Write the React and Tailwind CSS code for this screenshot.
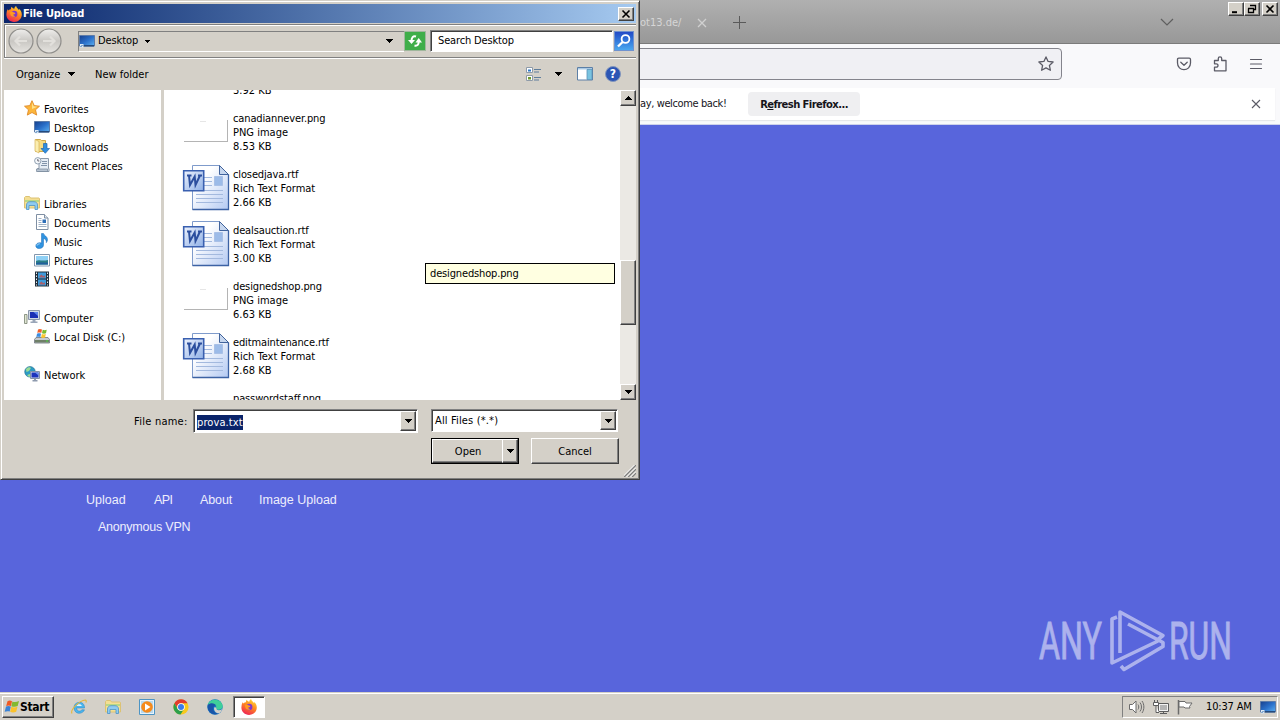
import React from 'react';
import { clsx } from 'clsx';

const raised = 'border border-t-white border-l-white border-r-[#404040] border-b-[#404040] shadow-[inset_-1px_-1px_0_#808080] bg-[#d4d0c8]';
const sunken = 'border border-t-[#808080] border-l-[#808080] border-r-white border-b-white shadow-[inset_1px_1px_0_#404040] bg-white';

/* ---------- icons ---------- */

function Arrow({ className }) {
  return (
    <svg viewBox="0 0 7 4" className={clsx('w-[7px] h-1 shrink-0', className)} shapeRendering="crispEdges">
      <path d="M0 0h7L3.5 4z" fill="#000" />
    </svg>
  );
}

function FirefoxIcon({ className }) {
  return (
    <svg viewBox="0 0 16 16" className={className}>
      <defs>
        <linearGradient id="fx" x1="0.8" y1="0" x2="0.3" y2="1">
          <stop offset="0" stopColor="#ffe03a" />
          <stop offset="0.45" stopColor="#ff8a1f" />
          <stop offset="1" stopColor="#ee2257" />
        </linearGradient>
      </defs>
      <path d="M1.6 3.2l1 1.2C3.2 3.6 4 3.2 5 3.3c-.2-1 .1-2 .8-2.6.4 1.200 1.300 1.600 2.500 2C8.500 1.500 9.200.6 10.100 0c.3 1.800 1.700 2.500 2.900 4 .3-.5.3-.9.2-1.300 1.500 1.500 2.600 3.500 2.600 5.700 0 4.200-3.400 7.500-7.700 7.500S.4 12.700.4 8.500c0-2 .4-3.700 1.200-5.300z" fill="url(#fx)" />
      <circle cx="8.200" cy="8" r="3.200" fill="#8038cc" />
      <path d="M4.300 5.800c1.200-.8 2.600-.2 3.500.7 1 .2 1.500.5 1.500.9-.4.700-1.500.6-1.900 1.200-.2 1 .8 1.700 2 1.400-1.200 1.400-3.800 1-4.700-.8-.6-1.100-.8-2.300-.4-3.400z" fill="#ff9a20" />
    </svg>
  );
}

function MonitorIcon({ className }) {
  return (
    <svg viewBox="0 0 16 16" className={className}>
      <defs>
        <linearGradient id="mon" x1="0" y1="0" x2="1" y2="1">
          <stop offset="0" stopColor="#173f8c" />
          <stop offset="0.5" stopColor="#2a6fc9" />
          <stop offset="1" stopColor="#5cb0f0" />
        </linearGradient>
      </defs>
      <path d="M.5 2.500h15v10.500h-15z" fill="url(#mon)" stroke="#5d7ba8" />
      <path d="M1 12h14v1.500H1z" fill="#244a7c" />
      <path d="M1 11h3.500v3.500H1z" fill="#dce9f5" />
      <path d="M1.500 14l2-2" stroke="#2c6aae" fill="none" />
    </svg>
  );
}

function StarIcon({ className }) {
  return (
    <svg viewBox="0 0 16 16" className={className}>
      <path d="M8 .7l2.200 4.900 5.300.6-4 3.600 1.200 5.300L8 12.500l-4.700 2.600 1.200-5.300-4-3.600 5.300-.6z" fill="#fcb63a" stroke="#e08a28" strokeWidth=".9" />
      <path d="M8 2.500l1.600 3.800 3.800.5L8 9z" fill="#ffe08a" />
    </svg>
  );
}

function DownloadsIcon({ className }) {
  return (
    <svg viewBox="0 0 16 16" className={className}>
      <path d="M1.500 1.500h5l1 1h4v11h-10z" fill="#f5dc84" stroke="#cfa94a" />
      <path d="M1 1.500l4 2V15l-4-2z" fill="#fbeeb0" stroke="#d6b35a" strokeWidth=".7" />
      <path d="M9.500 5.500h3.500v5h2.500l-4.200 4.800L7 10.500h2.500z" fill="#2f8ee0" stroke="#1c66b0" strokeWidth=".7" />
    </svg>
  );
}

function RecentIcon({ className }) {
  return (
    <svg viewBox="0 0 16 16" className={className}>
      <path d="M5 1.500h9.500v10H15v3H3.500v-3H5z" fill="#e6edf5" stroke="#8b99aa" />
      <path d="M2.500 12h11v2.500h-11z" fill="#b8c4d2" stroke="#76879a" strokeWidth=".7" />
      <path d="M8 4.500h5M8 6.500h5M7 8.500h6" stroke="#8294aa" />
      <circle cx="3.800" cy="3.800" r="3.200" fill="#f5f8fb" stroke="#8797aa" strokeWidth=".9" />
      <path d="M3.800 2v2h1.500" stroke="#445" strokeWidth=".8" fill="none" />
    </svg>
  );
}

function LibrariesIcon({ className }) {
  return (
    <svg viewBox="0 0 16 16" className={className}>
      <path d="M.5 13V2.500l1-1h4l1 1.500h8.500l.5.5V13z" fill="#f4df93" stroke="#dcc274" />
      <path d="M1 5h14v2H1z" fill="#b9d886" />
      <path d="M2.500 14.500V10c0-2 1.500-3.300 3.500-3.300h4c2 0 3.500 1.300 3.500 3.300v4.500H11v-4H5v4z" fill="#8fcbf0" stroke="#4d94c8" strokeWidth=".8" />
    </svg>
  );
}

function DocumentIcon({ className }) {
  return (
    <svg viewBox="0 0 16 16" className={className}>
      <path d="M2.500.5h8l3.500 3.500v11.500H2.500z" fill="#fff" stroke="#7f8fa3" />
      <path d="M10.500.5V4H14" fill="#dfe7ef" stroke="#7f8fa3" />
      <path d="M4.500 4.500h3M4.500 6.500h3M4.500 8.500h3M4.500 10.500h8M4.500 12.500h8" stroke="#9fb1c6" />
      <path d="M8.500 5.500h3.500v3.500H8.500z" fill="#2e6fb8" />
    </svg>
  );
}

function MusicIcon({ className }) {
  return (
    <svg viewBox="0 0 16 16" className={className}>
      <path d="M7.500.5h2c.3 2 4 2.800 4 6 0 1.400-.6 2.500-1.200 3.200.4-2.300-.8-3.700-2.800-4.200V12c0 2-1.800 3.500-4.200 3.500-2 0-3.500-1-3.500-2.600C1.800 11 3.700 9.700 5.700 9.700c.7 0 1.300.1 1.800.4z" fill="#2f93e0" stroke="#1a68b4" strokeWidth=".5" />
      <path d="M3 12.500c.3-1 1.500-1.700 2.700-1.700" stroke="#b5e0fb" fill="none" />
    </svg>
  );
}

function PicturesIcon({ className }) {
  return (
    <svg viewBox="0 0 16 16" className={className}>
      <path d="M.5 2.500h15v11.500H.5z" fill="#fff" stroke="#8397ad" />
      <path d="M2 4h12v8.500H2z" fill="#8ed0f5" />
      <path d="M2 9c3-2 5 .5 12-1v4.500H2z" fill="#2c7f86" />
      <path d="M2 11c4-1 8 0 12-.5v2H2z" fill="#225f9c" />
    </svg>
  );
}

function VideosIcon({ className }) {
  return (
    <svg viewBox="0 0 16 16" className={className}>
      <path d="M1 .5h14v15H1z" fill="#23303c" />
      <path d="M4 1.500h8v6H4zM4 8.500h8v6H4z" fill="#3f9bdb" />
      <path d="M5.500 5l2-1.500 1.500 1.500 2-.5v2h-5.500zM5.500 12l2-1.500 1.500 1.500 2-.5v2h-5.500z" fill="#a85f6a" />
      <path d="M2.500 1.500v13M13.500 1.500v13" stroke="#e8eef3" strokeDasharray="1.5 1.5" />
    </svg>
  );
}

function ComputerIcon({ className }) {
  return (
    <svg viewBox="0 0 16 16" className={className}>
      <path d="M.5 5.500h2.500v9H.5z" fill="#dfe5d2" stroke="#76806e" strokeWidth=".8" />
      <path d="M4.500 1.500h11v9h-11z" fill="#cfd8e6" stroke="#8a97ab" />
      <path d="M6 3h8v6H6z" fill="#1b2fb4" />
      <path d="M9.500 3H14v4z" fill="#5b83ec" />
      <path d="M8.500 11h3v1.500h2v1.500H6.500v-1.500h2z" fill="#9aa6b8" />
    </svg>
  );
}

function DiskIcon({ className }) {
  return (
    <svg viewBox="0 0 16 16" className={className}>
      <path d="M2 9.500h12l1.500 2v3.500H.5v-3.500z" fill="#c6cbd0" stroke="#6d757d" strokeWidth=".8" />
      <path d="M1 12h14v2.500H1z" fill="#6f8068" />
      <path d="M12 12.500h2v1h-2z" fill="#4bdb3c" />
      <path d="M4 1.500c1.500-.8 2.600-.6 4 0L7.300 5c-1.400-.6-2.500-.6-4 0z" fill="#f0602a" />
      <path d="M8.700 1.700c1.400.6 2.600.6 4 0L12 5.200c-1.400.6-2.600.6-4 0z" fill="#7dbb2c" />
      <path d="M3 5.800c1.500-.6 2.600-.6 4 0l-.7 3.500c-1.400-.6-2.500-.6-4 0z" fill="#3b8ce0" />
      <path d="M7.800 6c1.400.6 2.600.6 4 0l-.7 3.500c-1.400.6-2.600.6-4 0z" fill="#fcc52e" />
    </svg>
  );
}

function NetworkIcon({ className }) {
  return (
    <svg viewBox="0 0 16 16" className={className}>
      <circle cx="6" cy="5.800" r="5.300" fill="#2c9bc4" stroke="#26708e" strokeWidth=".6" />
      <path d="M2 3c2-2 4-2 5-1L5 5 2.500 6zM3 9l3-1 1 2-2 1z" fill="#9bdc94" />
      <path d="M6.500 5.500h9v7h-9z" fill="#d4dcea" stroke="#8492a8" />
      <path d="M7.500 6.500h7v5h-7z" fill="#1c33bc" />
      <path d="M11 6.500h3.500v3z" fill="#6a90f0" />
      <path d="M10 13h2v1h1.500v1.500h-5V14H10z" fill="#8e9aae" />
    </svg>
  );
}

function WordFileIcon() {
  return (
    <svg viewBox="0 0 48 48" className="w-12 h-12">
      <defs>
        <linearGradient id="wpage" x1="0" y1="0" x2="1" y2="1">
          <stop offset="0.3" stopColor="#fff" />
          <stop offset="1" stopColor="#b3c9f2" />
        </linearGradient>
        <linearGradient id="wbox" x1="0" y1="0" x2="1" y2="1">
          <stop offset="0" stopColor="#eef3fd" />
          <stop offset="1" stopColor="#8fb0e6" />
        </linearGradient>
      </defs>
      <path d="M10.500 1.500h27l9 9v35h-36z" fill="url(#wpage)" stroke="#7f9bcb" />
      <path d="M46.500 10.500v35h-36" fill="none" stroke="#3c62a4" strokeWidth="1.300" />
      <path d="M37.500 1.500v9h9z" fill="#c6d6ee" stroke="#41639c" />
      <path d="M22 13.500h8M22 17.500h8M22 21.500h8M14 26.500h27M14 30.500h27M14 34.500h27M14 38.500h27" stroke="#a3b9de" />
      <path d="M32.500 12.500h8v9h-8z" fill="#9cbbe8" stroke="#a9c0e6" />
      <path d="M1.700 6.700h20v20h-20z" fill="url(#wbox)" stroke="#3a60b0" strokeWidth="1.600" />
      <path d="M5 11.500h4.500M7 11.500l1 9.500 4.700-8.500.8 8.500 4.500-9.500M16 11.500h4" fill="none" stroke="#2c4f9e" strokeWidth="2" />
    </svg>
  );
}

function WindowsLogo({ className }) {
  return (
    <svg viewBox="0 0 16 16" className={className}>
      <path d="M3.500 2.300C5 1.200 6.500 1.300 8 2.200L7 7C5.500 6.200 4 6.200 2.200 7z" fill="#ee5a24" />
      <path d="M8.400 2.500c1.700.9 4.200.8 6.600-.5l-1.300 5c-2 1-4.400 1-6.300.2z" fill="#83b92f" />
      <path d="M2 7.500c1.700-.8 3.200-.8 4.800 0l-1.100 5.100C4 12 2.500 12 .7 12.800z" fill="#3a83d6" />
      <path d="M7.300 7.800c1.800.9 4.200.8 6.200-.1l-1.300 5c-2 1-4.200 1-6 .1z" fill="#fbc22b" />
    </svg>
  );
}

/* ---------- firefox window behind the dialog ---------- */

function CaptionButton({ children, className }) {
  return (
    <div className={clsx(raised, 'w-4 h-3.5 flex items-center justify-center', className)}>
      <svg viewBox="0 0 10 10" className="w-2.5 h-2.5 shrink-0" fill="none" stroke="#000" strokeWidth="1.6">
        {children}
      </svg>
    </div>
  );
}

function BrowserWindow() {
  return (
    <div className="flex flex-col h-[692px]">
      <div className="h-11 shrink-0 flex pl-[640px] bg-gradient-to-b from-[#b0b0b0] to-[#989898] border-b border-[#7b7b7b]">
        <div className="flex items-center w-[53px] pt-1 text-[11px] text-[#d6d6d6]">ot13.de/</div>
        <div className="flex items-center gap-[22px] pt-0.5 text-[#d0d0d0]">
          <svg viewBox="0 0 18 18" className="w-[18px] h-[18px]" fill="none" stroke="currentColor" strokeWidth="1.300">
            <path d="M5 5l8 8M13 5l-8 8" />
          </svg>
          <svg viewBox="0 0 13 13" className="w-[13px] h-[13px]" fill="none" stroke="#5a5a5a" strokeWidth="1">
            <path d="M6.500 0v13M0 6.500h13" />
          </svg>
        </div>
        <div className="flex-1" />
        <svg viewBox="0 0 14 8" className="w-3.5 h-2 mt-[18px] mr-[54px]" fill="none" stroke="#5f5f5f" strokeWidth="1.200">
          <path d="M1 1l6 6 6-6" />
        </svg>
        <div className="flex pt-0.5 pr-0.5">
          <CaptionButton><path d="M1 8.200h5" strokeWidth="2" /></CaptionButton>
          <CaptionButton>
            <path d="M3.500 1.500h5v4h-2M3 1.500h6M1 4.500h5.500v4H1.500v-4" strokeWidth="1.300" />
          </CaptionButton>
          <CaptionButton className="ml-0.5"><path d="M1.500 1.500l7 7M8.500 1.500l-7 7" /></CaptionButton>
        </div>
      </div>

      <div className="h-11 shrink-0 flex items-start pt-1 bg-[#f9f9fb] text-[#5b5b66]">
        <div className="w-[1062px] h-8 flex items-center justify-end pr-[7px] rounded-r bg-[#f0f0f4] border border-[#84848c]">
          <svg viewBox="0 0 16 16" className="w-4 h-4" fill="none" stroke="currentColor" strokeWidth="1.300" strokeLinejoin="round">
            <path d="M8 .9l2.100 4.500 5 .6-3.700 3.400 1 4.900L8 11.900l-4.400 2.400 1-4.900L.9 6l5-.6z" />
          </svg>
        </div>
        <div className="flex-1 h-8 flex items-center justify-end gap-5 pr-4">
          <svg viewBox="0 0 16 16" className="w-4 h-4" fill="none" stroke="currentColor" strokeWidth="1.300" strokeLinecap="round" strokeLinejoin="round">
            <path d="M2.800 2.200h10.400c.8 0 1.300.5 1.300 1.300V7c0 4-3 6.700-6.500 6.700S1.500 11 1.500 7V3.500c0-.8.5-1.300 1.300-1.300z" />
            <path d="M4.800 6.200L8 9.200l3.200-3" />
          </svg>
          <svg viewBox="0 0 16 16" className="w-4 h-4" fill="none" stroke="currentColor" strokeWidth="1.300" strokeLinejoin="round">
            <path d="M2.500 4.500h3.800V2.600a1.700 1.700 0 0 1 3.400 0v1.900H14v10.300H2.500v-3.600h1.800a1.700 1.700 0 0 0 0-3.400H2.500z" />
          </svg>
          <svg viewBox="0 0 16 16" className="w-4 h-4" stroke="currentColor" strokeWidth="1.200" strokeLinecap="round">
            <path d="M2.500 3.500h11M2.500 8h11M2.500 12.500h11" />
          </svg>
        </div>
      </div>

      <div className="h-[37px] shrink-0 pr-[5px] bg-[#f9f9fb] border-b border-[#cfd2ea]">
        <div className="h-8 flex items-center pl-[640px] bg-white shadow-[0_1px_1px_#e6e6ea]">
          <span className="w-[108px] text-[11px] text-[#15141a] tracking-[-0.38px]">ay, welcome back!</span>
          <button className="w-28 h-6 rounded bg-[#efeff1] text-[10px] font-bold text-[#15141a] font-['DejaVu_Sans'] tracking-[-0.58px]">
            R<span className="underline">e</span>fresh Firefox...
          </button>
          <div className="flex-1" />
          <svg viewBox="0 0 10 10" className="w-2.5 h-2.5 mr-3.5" stroke="#5b5b66" strokeWidth="1.100">
            <path d="M1 1l8 8M9 1l-8 8" />
          </svg>
        </div>
      </div>

      <div className="flex-1 bg-[#5865dc] pt-[365px] pl-[86px] text-[12.5px] text-[#eeeefc] font-['Liberation_Sans',sans-serif]">
        <div className="flex leading-[20px]">
          <span className="w-[68px]">Upload</span>
          <span className="w-[46px] tracking-[-0.6px]">API</span>
          <span className="w-[59px] tracking-[-0.1px]">About</span>
          <span>Image Upload</span>
        </div>
        <div className="pl-3 mt-[7px] leading-[20px] tracking-[-0.22px]">Anonymous VPN</div>
      </div>
    </div>
  );
}

/* ---------- file dialog ---------- */

const places = [
  { label: 'Favorites', icon: StarIcon, root: true },
  { label: 'Desktop', icon: MonitorIcon },
  { label: 'Downloads', icon: DownloadsIcon },
  { label: 'Recent Places', icon: RecentIcon },
  null,
  { label: 'Libraries', icon: LibrariesIcon, root: true },
  { label: 'Documents', icon: DocumentIcon },
  { label: 'Music', icon: MusicIcon },
  { label: 'Pictures', icon: PicturesIcon },
  { label: 'Videos', icon: VideosIcon },
  null,
  { label: 'Computer', icon: ComputerIcon, root: true },
  { label: 'Local Disk (C:)', icon: DiskIcon },
  null,
  { label: 'Network', icon: NetworkIcon, root: true },
];

const files = [
  { name: '', type: '', size: '3.92 KB', kind: 'none' },
  { name: 'canadiannever.png', type: 'PNG image', size: '8.53 KB', kind: 'png' },
  { name: 'closedjava.rtf', type: 'Rich Text Format', size: '2.66 KB', kind: 'rtf' },
  { name: 'dealsauction.rtf', type: 'Rich Text Format', size: '3.00 KB', kind: 'rtf' },
  { name: 'designedshop.png', type: 'PNG image', size: '6.63 KB', kind: 'png' },
  { name: 'editmaintenance.rtf', type: 'Rich Text Format', size: '2.68 KB', kind: 'rtf' },
  { name: 'passwordstaff.png', type: '', size: '', kind: 'none' },
];

function PlacesPane() {
  return (
    <div className="w-[157px] shrink-0 pt-2 bg-white">
      {places.map((p, i) =>
        p ? (
          <div key={i} className={clsx('h-[19px] flex items-center gap-1', p.root ? 'pl-5' : 'pl-[30px]')}>
            <p.icon className="w-4 h-4" />
            <span className="pt-1 leading-[15px]">{p.label}</span>
          </div>
        ) : (
          <div key={i} className="h-[19px]" />
        )
      )}
    </div>
  );
}

function FileList() {
  return (
    <div className="flex-1 bg-white overflow-hidden">
      <div className="-mt-[42px]">
        {files.map((f, i) => (
          <div key={i} className="h-14 flex items-center pl-[18px] gap-[3px]">
            <div className="w-12 h-12">
              {f.kind === 'rtf' && <WordFileIcon />}
              {f.kind === 'png' && (
                <div className="ml-0.5 mt-3 w-11 h-[22px] border-r border-b border-[#b4b4b4] pt-px pl-4">
                  <div className="w-1.5 h-px bg-[#e6e6e6]" />
                </div>
              )}
            </div>
            <div className="leading-[14px] pt-0.5">
              <div className="h-3.5 tracking-[-0.13px]">{f.name}</div>
              <div className="h-3.5">{f.type}</div>
              <div className="h-3.5">{f.size}</div>
            </div>
          </div>
        ))}
      </div>
    </div>
  );
}

function ScrollBar() {
  return (
    <div className="w-4 flex flex-col bg-[#ebe9e4]">
      <div className={clsx(raised, 'h-4 flex items-center justify-center')}><Arrow className="rotate-180" /></div>
      <div className="h-[154px]" />
      <div className={clsx(raised, 'h-[65px]')} />
      <div className="flex-1" />
      <div className={clsx(raised, 'h-4 flex items-center justify-center')}><Arrow /></div>
    </div>
  );
}

function RoundButton({ flip }) {
  return (
    <svg viewBox="0 0 26 26" className={clsx('w-[26px] h-[26px]', flip && '-scale-x-100')}>
      <defs>
        <linearGradient id="rb" x1="0" y1="0" x2="0" y2="1">
          <stop offset="0" stopColor="#efeeec" />
          <stop offset="0.5" stopColor="#c9c7c3" />
          <stop offset="1" stopColor="#e6e4e0" />
        </linearGradient>
      </defs>
      <circle cx="13" cy="13" r="12" fill="url(#rb)" stroke="#8f8e8b" strokeWidth="1.200" />
      <path d="M19 13H8M12 8.500L7.500 13l4.500 4.500" fill="none" stroke="#e2e0dc" strokeWidth="2.200" />
    </svg>
  );
}

function AddressRow() {
  return (
    <div className="h-[34px] flex items-center border-t border-l border-[#808080] border-b border-b-[#808080] shadow-[0_1px_0_#fff,inset_1px_1px_0_#fff]">
      <div className="flex pl-[3px] w-[73px] shrink-0">
        <RoundButton />
        <div className="ml-0.5"><RoundButton flip /></div>
      </div>
      <div className="flex items-center w-[326px] h-[21px] border-t border-l border-b border-t-[#808080] border-l-[#808080] border-b-white">
        <MonitorIcon className="w-4 h-4" />
        <span className="ml-[3px] w-[47px] tracking-[-0.1px]">Desktop</span>
        <svg viewBox="0 0 5 3" className="w-[5px] h-[3px]" shapeRendering="crispEdges">
          <path d="M0 0h5L2.500 3z" />
        </svg>
        <div className="flex-1" />
        <Arrow className="mr-[11px]" />
      </div>
      <div className="w-[22px] h-5 bg-[#3fae49] border border-[#9fb79c] flex items-center justify-center">
        <svg viewBox="0 0 16 16" className="w-4 h-4" fill="none" stroke="#fff" strokeWidth="2">
          <path d="M9 3.500C6 2.500 4.500 4.500 4.500 8" />
          <path d="M1 7h7l-3.500 4z" fill="#fff" stroke="none" />
          <path d="M7.500 12.500c3 .8 4.200-1 4.200-4" />
          <path d="M8.500 9.500h6.500L11.700 5z" fill="#fff" stroke="none" />
        </svg>
      </div>
      <div className={clsx(sunken, 'w-[183px] h-[22px] flex items-center pl-[7px] pt-px ml-1 tracking-[-0.15px]')}>Search Desktop</div>
      <div className="w-5 h-5 ml-px border border-[#6f92cf] bg-gradient-to-b from-[#2449c6] to-[#4ba7ef] flex items-center justify-center">
        <svg viewBox="0 0 16 16" className="w-4 h-4" fill="none" stroke="#fff" strokeWidth="1.800">
          <circle cx="9.500" cy="6" r="3.900" />
          <path d="M6.600 9L2 13.500" strokeWidth="2.400" />
        </svg>
      </div>
    </div>
  );
}

function CommandBar() {
  return (
    <div className="h-8 flex items-center pl-3 pr-[15px]">
      <span className="w-[52px] pt-0.5">Organize</span>
      <Arrow />
      <span className="ml-5 pt-0.5">New folder</span>
      <div className="flex-1" />
      <svg viewBox="0 0 16 16" className="w-4 h-4">
        <path d="M.5 1.500h6v5h-6zM.5 9.500h6v5h-6z" fill="#fff" stroke="#8e9aa8" />
        <path d="M2 3.500h3v2H2z" fill="#2b78c8" />
        <path d="M2 11h3v2.500H2z" fill="#6f9a2c" />
        <path d="M8 3.500h7M8 6h5M8 11.500h7M8 14h5" stroke="#5f7d9c" />
      </svg>
      <Arrow className="ml-[13px]" />
      <svg viewBox="0 0 16 16" className="w-4 h-4 ml-[15px]">
        <path d="M.5 1.500h15v12.500H.5z" fill="#fff" stroke="#5c7fa6" />
        <path d="M1 2h14v1.500H1z" fill="#a9c8e4" />
        <path d="M10 3.500h5V13.500h-5z" fill="#79c3e0" stroke="#5c93b8" strokeWidth=".8" />
      </svg>
      <div className="w-4 h-4 ml-3 rounded-full bg-[#2c55b4] border border-[#8296bd] flex items-center justify-center text-white font-bold text-[12px] leading-none">?</div>
    </div>
  );
}

function FileDialog() {
  return (
    <div className="absolute left-0 top-0 w-[640px] h-[480px] bg-[#d4d0c8] border border-t-[#d4d0c8] border-l-[#d4d0c8] border-r-[#404040] border-b-[#404040] shadow-[inset_1px_1px_0_#fff,inset_-1px_-1px_0_#808080] p-[3px] flex flex-col text-[11px] text-black whitespace-nowrap">
      <div className="h-[19px] shrink-0 flex items-center pl-0.5 pr-0.5 bg-gradient-to-r from-[#0a246a] to-[#a6caf0]">
        <FirefoxIcon className="w-4 h-4" />
        <span className="ml-[1px] flex-1 text-[11px] font-bold text-white tracking-[-0.15px] pt-px">File Upload</span>
        <CaptionButton><path d="M1.500 1.500l7 7M8.500 1.500l-7 7" /></CaptionButton>
      </div>
      <div className="mt-px"><AddressRow /></div>
      <CommandBar />
      <div className="h-[310px] shrink-0 flex relative">
        <PlacesPane />
        <div className="w-[3px] bg-[#d4d0c8]" />
        <FileList />
        <ScrollBar />
        <div className="absolute left-[421px] top-[173px] w-[190px] h-[21px] border border-black bg-[#ffffe1] flex items-center pl-1 pt-0.5 tracking-[-0.15px]">
          designedshop.png
        </div>
      </div>
      <div className="flex pt-[9px] pl-[130px]">
        <span className="w-[59px] pt-[5px] leading-[16px] tracking-[0.25px]">File name:</span>
        <div className={clsx(sunken, 'w-[225px] h-6 flex items-center p-0.5 pr-px')}>
          <span className="bg-[#0a246a] text-white leading-[15px] tracking-[0.1px] ml-px mt-0.5">prova.txt</span>
          <div className="flex-1" />
          <div className={clsx(raised, 'w-4 h-5 flex items-center justify-center')}><Arrow /></div>
        </div>
        <div className={clsx(sunken, 'ml-[13px] w-[187px] h-[23px] flex items-center p-0.5 pr-px')}>
          <span className="ml-px pt-0.5 tracking-[0.15px]">All Files (*.*)</span>
          <div className="flex-1" />
          <div className={clsx(raised, 'w-4 h-[19px] flex items-center justify-center')}><Arrow /></div>
        </div>
      </div>
      <div className="flex gap-3 pl-[427px] mt-[5px] text-center">
        <div className="w-[88px] h-[26px] border border-black flex">
          <div className={clsx(raised, 'w-[72px] leading-[24px] border-r-0 shadow-[inset_0_-1px_0_#808080]')}>Open</div>
          <div className={clsx(raised, 'w-4 -ml-px flex items-center justify-center')}><Arrow /></div>
        </div>
        <div className={clsx(raised, 'w-[88px] h-[26px] leading-[26px]')}>Cancel</div>
      </div>
      <div className="flex justify-end pt-px -mb-0.5">
        <svg viewBox="0 0 12 12" className="w-3 h-3" stroke="#808080" strokeWidth="1.500">
          <path d="M0 12L12 0M4 12l8-8M8 12l4-4" />
          <path d="M-1.500 12L12-1.500M2.500 12L12 2.500M6.500 12L12 6.500" stroke="#fff" strokeWidth="1" />
        </svg>
      </div>
    </div>
  );
}

/* ---------- taskbar ---------- */

function Taskbar() {
  return (
    <div className="h-7 flex items-center pt-[3px] pb-0.5 px-0.5 bg-[#d4d0c8] border-t border-[#d4d0c8] shadow-[inset_0_1px_0_#fff]">
      <div className={clsx(raised, 'w-[52px] h-[22px] flex items-center pl-px')}>
        <WindowsLogo className="w-4 h-4" />
        <span className="text-[12px] font-bold text-black tracking-[-0.35px]">Start</span>
      </div>
      <div className="flex items-center pl-[17px] gap-[18px]">
        <svg viewBox="0 0 16 16" className="w-4 h-4">
          <path d="M13.500 9H5.500c.2 3.500 4.200 4 5.300 1.800h2.700c-1.800 5-10.500 5-10.500-2.300 0-6.500 10.800-7.500 10.500.5z" fill="#4bb5ec" stroke="#2583c4" strokeWidth=".5" />
          <path d="M5.600 7h5.200c-.3-2.500-4.700-2.500-5.200 0z" fill="#e6f3fb" />
          <path d="M1 14.500C-1 11 8 1.500 14.500 1c1 .3.8 1.800.3 2.500" fill="none" stroke="#e6b73a" strokeWidth="1.100" />
        </svg>
        <LibrariesIcon className="w-4 h-4" />
        <svg viewBox="0 0 16 16" className="w-4 h-4">
          <path d="M.5.5h15v15H.5z" fill="#e8f3fb" stroke="#4d94c4" />
          <path d="M2 2h12v12H2z" fill="#b7d9ef" />
          <circle cx="8" cy="8" r="5.800" fill="#f58a1c" />
          <path d="M6 4.500L11.500 8 6 11.500z" fill="#fff" />
        </svg>
        <svg viewBox="0 0 16 16" className="w-4 h-4">
          <circle cx="8" cy="8" r="7.600" fill="#f8c91c" />
          <path d="M1.400 4.200a7.600 7.600 0 0 1 13.200 0H8a3.800 3.800 0 0 0-3.500 5.300z" fill="#e23c2e" />
          <path d="M1.400 4.200A7.600 7.600 0 0 0 7.500 15.600l3.700-5.800a3.800 3.800 0 0 1-6.600 0z" fill="#2c9f4b" />
          <circle cx="8" cy="8" r="3.800" fill="#fff" />
          <circle cx="8" cy="8" r="3" fill="#3b7cea" />
        </svg>
        <svg viewBox="0 0 16 16" className="w-4 h-4">
          <circle cx="8" cy="8" r="7.700" fill="#1373c4" />
          <path d="M.8 6C2-1 14.500-1.500 15.700 7c.2 2.500-2 4-4.500 3.800-2-.1-2.700-1-1.900-2C10 5.500 4 3.500.8 6z" fill="#3fcf9a" />
          <path d="M.8 6C3.500 3 8 4 9.300 6.500 6.500 6 5.500 9 6.500 11.500c.8 1.900 3 3.300 5.500 3C6 17-.5 12.500.8 6z" fill="#1a55a8" />
          <path d="M9.300 8.500c-.6 3 3.200 3.600 6 1.500-.6 2-1.700 3.300-3 4.300-3.500.5-6-3-5-6z" fill="#d4d0c8" />
        </svg>
      </div>
      <div className={clsx(sunken, 'w-8 h-[22px] ml-2.5 flex items-center justify-center')}>
        <FirefoxIcon className="w-4 h-4" />
      </div>
      <div className="flex-1" />
      <div className="w-[156px] h-[22px] flex items-center border border-t-[#808080] border-l-[#808080] border-r-white border-b-white pl-1.5 text-[11px] whitespace-nowrap text-black">
        <svg viewBox="0 0 16 16" className="w-4 h-4" fill="none" stroke="#6b6b6b">
          <path d="M.5 5.500h3L7 2v12L3.500 10.500h-3z" fill="#fff" />
          <path d="M9 5.500c1 1.500 1 3.500 0 5M11 3.500c2 2.500 2 6.500 0 9M13 2c2.500 3.500 2.500 8.500 0 12" />
        </svg>
        <svg viewBox="0 0 16 16" className="w-4 h-4 ml-2" fill="none" stroke="#5c5c5c">
          <path d="M5.500 4.500h10v8h-10z" fill="#f2f2f2" />
          <path d="M7 6h7v5H7z" fill="#b4b4b4" stroke="none" />
          <path d="M7 14.500h7M10.500 12.500v2" />
          <path d="M1.500 1v3M4.500 1v3M.5 3.500h5v3h-5zM3 6.500v7h3" fill="#fff" />
        </svg>
        <svg viewBox="0 0 16 16" className="w-4 h-4 ml-2" fill="#fff" stroke="#6b6b6b">
          <path d="M1.500 1v14.500" strokeWidth="1.500" />
          <path d="M2 2.500h6l1 1.500h6l-2.500 3.500L13 9H8L7 8H2z" />
        </svg>
        <span className="ml-[13px] w-[54px] tracking-[-0.15px]">10:37 AM</span>
        <MonitorIcon className="w-4 h-4" />
      </div>
    </div>
  );
}

function Watermark() {
  return (
    <svg viewBox="0 0 210 70" className="absolute left-[1036px] top-[606px] w-[210px] h-[70px] opacity-50" fill="#fff" fontFamily="Roboto, sans-serif" fontSize="51">
      <g stroke="#fff" strokeWidth=".8">
        <text x="3" y="53" textLength="63" lengthAdjust="spacingAndGlyphs">ANY</text>
        <text x="133" y="53" textLength="63" lengthAdjust="spacingAndGlyphs">RUN</text>
      </g>
      <path
        d="M84 47V6l43 23.500-4.500 3.500M81 11l-5 2v44l46-22M92 18l35 18.500v4L88 63.500l-3-3.500"
        fill="none"
        stroke="#fff"
        strokeWidth="3.600"
        strokeLinejoin="round"
      />
    </svg>
  );
}

export default function App() {
  return (
    <div className="relative w-[1280px] h-[720px] overflow-hidden bg-[#5865dc] font-['DejaVu_Sans_Condensed','DejaVu_Sans',sans-serif]">
      <BrowserWindow />
      <Taskbar />
      <FileDialog />
      <Watermark />
    </div>
  );
}
